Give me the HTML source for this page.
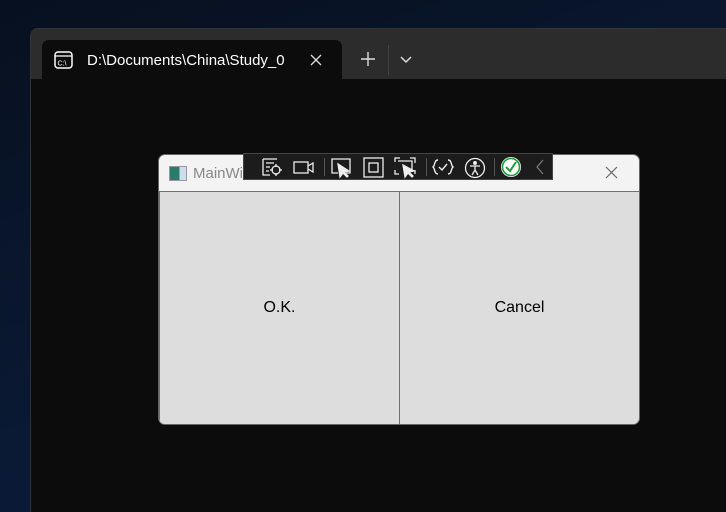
<!DOCTYPE html><html><head><style>
html,body{margin:0;width:726px;height:512px;overflow:hidden}
body{background:linear-gradient(160deg,#07101f 0%,#0a1a35 60%,#0b1d3c 100%);font-family:"Liberation Sans",sans-serif;position:relative}
.term{position:absolute;left:30px;top:28px;width:696px;height:484px;background:#2c2c2c;border-radius:8px 0 0 0;border-left:1px solid #333;border-top:1px solid #333;overflow:hidden}
.content{position:absolute;left:0;top:50px;right:0;bottom:0;background:#0c0c0c}
.tab{position:absolute;left:11px;top:11px;width:300px;height:42px;background:#0c0c0c;border-radius:7px 7px 0 0;color:#fff;font-size:15px}
.dlg{position:absolute;left:158px;top:154px;width:482px;height:271px;background:#f3f3f3;border-radius:7px;border:1px solid #666;box-sizing:border-box;overflow:hidden}
.btn{position:absolute;top:36px;height:234px;background:#dddddd;border:1px solid #707070;box-sizing:border-box;display:flex;align-items:center;justify-content:center;font-size:16px;color:#000}
.tb{position:absolute;left:243px;top:153px;width:310px;height:27px;background:#1c1c1c;border:1px solid #444;box-sizing:border-box}
.tb svg{position:absolute;top:3px}
</style></head><body>
<div class="term">
 <div class="tab">
  <svg style="position:absolute;left:12px;top:11px" width="20" height="19" viewBox="0 0 20 19"><rect x="1" y="1" width="17" height="16" rx="3" fill="none" stroke="#fff" stroke-width="1.5"/><line x1="1" y1="5" x2="18" y2="5" stroke="#fff" stroke-width="1.2"/><text x="3.5" y="14.5" font-size="7" fill="#fff" font-family="Liberation Sans">C:\</text></svg>
  <span style="position:absolute;left:45px;top:12px;font-weight:500">D:\Documents\China\Study_0</span>
  <svg style="position:absolute;left:268px;top:14px" width="12" height="12"><path d="M1 1L11 11M11 1L1 11" stroke="#ddd" stroke-width="1.3"/></svg>
 </div>
 <svg style="position:absolute;left:330px;top:23px" width="14" height="14"><path d="M7 0V14M0 7H14" stroke="#ddd" stroke-width="1.4"/></svg>
 <div style="position:absolute;left:357px;top:16px;width:1px;height:30px;background:#444"></div>
 <svg style="position:absolute;left:369px;top:27px" width="12" height="8"><path d="M1 1 L6 6 L11 1" fill="none" stroke="#ddd" stroke-width="1.5"/></svg>
 <div class="content"></div>
</div>
<div class="dlg">
 <div style="position:absolute;left:10px;top:11px;width:16px;height:13px;border:1px solid #999;background:linear-gradient(90deg,#2b7a6a 60%,#cde 60%)"></div>
 <span style="position:absolute;left:34px;top:10px;color:#888;font-size:15px">MainWi</span>
 <svg style="position:absolute;left:446px;top:11px" width="13" height="13"><path d="M1 1L12 12M12 1L1 12" stroke="#666" stroke-width="1.2"/></svg>
 <div class="btn" style="left:0;width:241px">O.K.</div>
 <div class="btn" style="left:240px;width:241px">Cancel</div>
</div>
<div class="tb">
 <svg style="left:17px" width="22" height="20" viewBox="0 0 22 20" fill="none" stroke="#eee" stroke-width="1.3"><path d="M2 2h14M2 2v16h7M5 6h8M5 10h4M5 14h3"/><circle cx="15" cy="13" r="4"/><path d="M15 7v3M15 16v3M9 13h3M18 13h3"/></svg>
 <svg style="left:48px" width="24" height="20" viewBox="0 0 24 20" fill="none" stroke="#eee" stroke-width="1.3"><rect x="2" y="5" width="14" height="11"/><path d="M16 9l5-3v9l-5-3"/></svg>
 <div style="position:absolute;left:80px;top:4px;width:1px;height:18px;background:#555"></div>
 <svg style="left:86px" width="24" height="22" viewBox="0 0 24 22" fill="none" stroke="#eee" stroke-width="1.3"><path d="M8 16H2V2h18v14h-4"/><path d="M8 7l2 13 3-4 4 4 1-1-4-4 5-1z" fill="#eee"/></svg>
 <svg style="left:119px" width="22" height="22" viewBox="0 0 22 22" fill="none" stroke="#eee" stroke-width="1.3"><rect x="1" y="1" width="19" height="19"/><rect x="6" y="6" width="9" height="9"/></svg>
 <svg style="left:150px" width="24" height="22" viewBox="0 0 24 22" fill="none" stroke="#eee" stroke-width="1.3"><path d="M1 5V1h5M16 1h5v5M1 13v4h4M21 13v4"/><path d="M4 4h14v9"/><path d="M9 8l2 12 3-4 4 4 1-1-4-4 5-1z" fill="#eee"/></svg>
 <div style="position:absolute;left:182px;top:4px;width:1px;height:18px;background:#555"></div>
 <svg style="left:188px" width="22" height="20" viewBox="0 0 22 20" fill="none" stroke="#eee" stroke-width="1.4"><path d="M6 3C2 3 3 9 1 10c2 1 1 7 5 7M16 3c4 0 3 6 5 7-2 1-1 7-5 7"/><path d="M7 10l3 3 5-6"/></svg>
 <svg style="left:220px" width="22" height="22" viewBox="0 0 22 22" fill="none" stroke="#eee" stroke-width="1.3"><circle cx="11" cy="11" r="9.5"/><circle cx="11" cy="6" r="1.3" fill="#eee"/><path d="M6 9h10M11 9v4l-3 5M11 13l3 5"/></svg>
 <div style="position:absolute;left:250px;top:4px;width:1px;height:18px;background:#555"></div>
 <svg style="left:256px;top:2px" width="22" height="22" viewBox="0 0 22 22"><circle cx="11" cy="11" r="10" fill="#fff"/><circle cx="11" cy="11" r="8.5" fill="none" stroke="#1a9e3a" stroke-width="1.6"/><path d="M6 11l4 4 6-9" fill="none" stroke="#1a9e3a" stroke-width="2"/></svg>
 <svg style="left:291px" width="10" height="20" viewBox="0 0 10 20"><path d="M8 3L2 10l6 7" fill="none" stroke="#777" stroke-width="1.3"/></svg>
</div>
</body></html>
